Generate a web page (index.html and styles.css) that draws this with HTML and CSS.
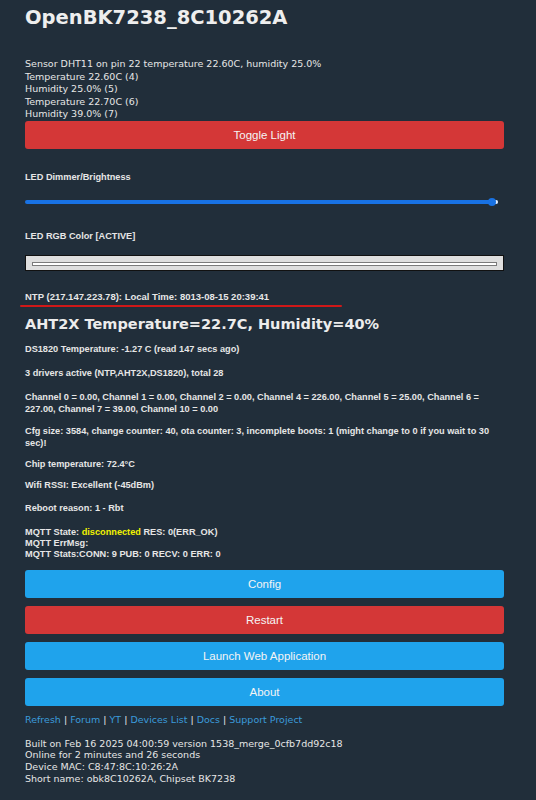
FILE: index.html
```html
<!DOCTYPE html>
<html>
<head>
<meta charset="utf-8">
<title>OpenBK7238_8C10262A</title>
<link rel="stylesheet" href="styles.css">
</head>
<body>
<div class="page">
  <h1 class="title">OpenBK7238_8C10262A</h1>
  <div class="sensor">Sensor DHT11 on pin 22 temperature 22.60C, humidity 25.0%<br>Temperature 22.60C (4)<br>Humidity 25.0% (5)<br>Temperature 22.70C (6)<br>Humidity 39.0% (7)</div>
  <button class="btn btn-red">Toggle Light</button>
  <div class="label label-dimmer">LED Dimmer/Brightness</div>
  <div class="slider">
    <div class="slider-track"></div>
    <div class="slider-thumb"></div>
  </div>
  <div class="label label-rgb">LED RGB Color [ACTIVE]</div>
  <div class="color-box"><div class="color-swatch"></div></div>
  <div class="info ntp">NTP (217.147.223.78): Local Time: 8013-08-15 20:39:41</div>
  <div class="mark"></div>
  <h2 class="aht">AHT2X Temperature=22.7C, Humidity=40%</h2>
  <div class="info i-ds">DS1820 Temperature: -1.27 C (read 147 secs ago)</div>
  <div class="info i-drv">3 drivers active (NTP,AHT2X,DS1820), total 28</div>
  <div class="info multi i-ch">Channel 0 = 0.00, Channel 1 = 0.00, Channel 2 = 0.00, Channel 4 = 226.00, Channel 5 = 25.00, Channel 6 = 227.00, Channel 7 = 39.00, Channel 10 = 0.00</div>
  <div class="info multi i-cfg">Cfg size: 3584, change counter: 40, ota counter: 3, incomplete boots: 1 (might change to 0 if you wait to 30 sec)!</div>
  <div class="info i-chip">Chip temperature: 72.4°C</div>
  <div class="info i-wifi">Wifi RSSI: Excellent (-45dBm)</div>
  <div class="info i-reb">Reboot reason: 1 - Rbt</div>
  <div class="info mqtt">MQTT State: <span class="warn">disconnected</span> RES: 0(ERR_OK)<br>MQTT ErrMsg:<br>MQTT Stats:CONN: 9 PUB: 0 RECV: 0 ERR: 0</div>
  <div class="buttons">
    <button class="btn btn-blue">Config</button>
    <button class="btn btn-red">Restart</button>
    <button class="btn btn-blue">Launch Web Application</button>
    <button class="btn btn-blue">About</button>
  </div>
  <div class="links"><a href="#">Refresh</a> | <a href="#">Forum</a> | <a href="#">YT</a> | <a href="#">Devices List</a> | <a href="#">Docs</a> | <a href="#">Support Project</a></div>
  <div class="footer">Built on Feb 16 2025 04:00:59 version 1538_merge_0cfb7dd92c18<br>Online for 2 minutes and 26 seconds<br>Device MAC: C8:47:8C:10:26:2A<br>Short name: obk8C10262A, Chipset BK7238</div>
</div>
</body>
</html>
```

FILE: styles.css
```css
html, body {
  margin: 0;
  padding: 0;
}
body {
  background: #212e3a;
  color: #e6e6e6;
  font-family: "DejaVu Sans", Verdana, sans-serif;
  font-size: 9.5px;
}
.page {
  width: 479px;
  padding: 6px 0 0 25px;
}
.title {
  margin: 0;
  font: bold 19.5px/24px "DejaVu Sans", Verdana, sans-serif;
  color: #eeeeee;
}
.sensor {
  margin-top: 28px;
  line-height: 12.6px;
}
.btn {
  display: block;
  width: 100%;
  height: 28px;
  padding: 0;
  border: 0;
  border-radius: 3px;
  color: #f4f4f4;
  font: 11.5px "Liberation Sans", Arial, sans-serif;
}
.btn-red {
  background: #d43737;
}
.btn-blue {
  background: #1fa3ec;
}
.label,
.info {
  font: bold 9.2px/11px "Liberation Sans", Arial, sans-serif;
  color: #e6e6e6;
}
.label-dimmer {
  margin-top: 23px;
}
.slider {
  position: relative;
  width: 473px;
  height: 8px;
  margin-top: 15px;
}
.slider-track {
  position: absolute;
  left: 0;
  right: 0;
  top: 2px;
  height: 4px;
  border-radius: 2px;
  background: #1872e4;
}
.slider-track::after {
  content: "";
  position: absolute;
  right: 0;
  top: 0;
  width: 3px;
  height: 4px;
  border-radius: 0 2px 2px 0;
  background: #e8eef6;
}
.slider-thumb {
  position: absolute;
  right: 2px;
  top: 0;
  width: 8px;
  height: 8px;
  border-radius: 50%;
  background: #1872e4;
}
.label-rgb {
  margin-top: 25px;
}
.color-box {
  box-sizing: border-box;
  height: 16px;
  margin-top: 13px;
  padding: 6px 6px 0 6px;
  background: #dedede;
  border: 1px solid #111111;
}
.color-swatch {
  height: 2px;
  background: #ffffff;
  border: 1px solid #7a7a7a;
}
.ntp {
  margin-top: 20px;
  font-size: 9.5px;
}
.mark {
  width: 322px;
  height: 2px;
  margin: 3px 0 0 -5px;
  border-radius: 1px;
  background: #d01818;
}
.aht {
  margin: 8px 0 0 0;
  font: bold 14.5px/18px "DejaVu Sans", Verdana, sans-serif;
  color: #ececec;
}
.i-ds {
  margin-top: 11px;
}
.i-drv {
  margin-top: 13px;
}
.multi {
  line-height: 11.5px;
}
.i-ch {
  margin-top: 13.5px;
}
.i-cfg {
  margin-top: 11px;
}
.i-chip {
  margin-top: 10px;
}
.i-wifi {
  margin-top: 10px;
}
.i-reb {
  margin-top: 12px;
}
.mqtt {
  margin-top: 13px;
  line-height: 10.7px;
}
.warn {
  color: #f2f200;
}
.buttons {
  display: flex;
  flex-direction: column;
  gap: 8px;
  margin-top: 10px;
}
.links {
  margin-top: 8px;
  line-height: 12px;
  color: #e6e6e6;
}
.links a {
  color: #3b9bdb;
  text-decoration: none;
}
.footer {
  margin-top: 12px;
  line-height: 11.7px;
}
```
